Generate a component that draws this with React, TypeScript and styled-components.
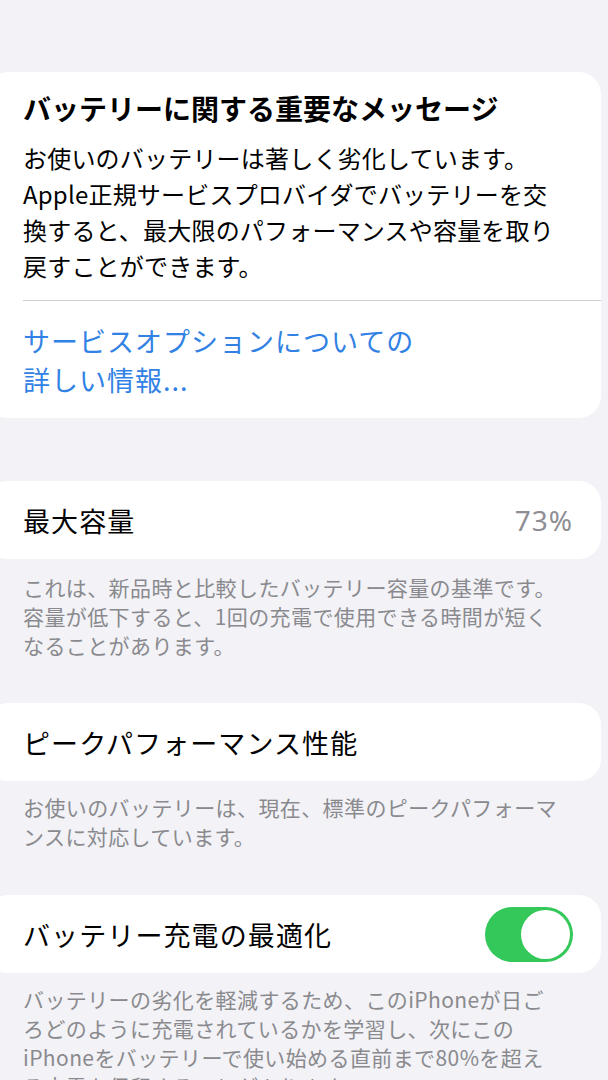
import React from 'react';
import styled, { createGlobalStyle } from 'styled-components';

const GlobalStyle = createGlobalStyle`
  html, body {
    margin: 0;
    padding: 0;
    background: #f2f2f7;
  }
  body {
    font-family: "Noto Sans CJK JP", "Noto Sans", sans-serif;
    color: #000;
    -webkit-font-smoothing: antialiased;
  }
`;

const StyledPage = styled.div`
  width: 608px;
  height: 1080px;
  overflow: hidden;
  padding-top: 72px;
  box-sizing: border-box;
`;

const StyledCard = styled.div<{ $gap?: number }>`
  margin: ${(p) => p.$gap ?? 0}px 7px 0 -14px;
  padding-left: 37px;
  background: #fff;
  border-radius: 22px;
`;

const StyledMessage = styled.div`
  padding: 18px 0 19px;
`;

const StyledTitle = styled.div`
  font-size: 28px;
  line-height: 36px;
  font-weight: 700;
`;

const StyledBody = styled.div`
  margin-top: 14px;
  padding-right: 20px;
  font-size: 24px;
  line-height: 36px;
  letter-spacing: 0.2px;
`;

const StyledDivider = styled.div`
  height: 1px;
  background: #cfcfd3;
  margin-top: 16px;
`;

const StyledLink = styled.div`
  margin-top: 20px;
  font-size: 27px;
  line-height: 39px;
  letter-spacing: 1px;
  color: #3182e4;
`;

const StyledRow = styled.div`
  height: 78px;
  display: flex;
  align-items: center;
  justify-content: space-between;
  padding-right: 28px;
`;

const StyledLabel = styled.span`
  font-size: 27px;
  letter-spacing: 1.1px;
`;

const StyledValue = styled.span`
  font-size: 28px;
  letter-spacing: 1px;
  color: #8e8e93;
  font-family: "Noto Sans", "Noto Sans CJK JP", sans-serif;
`;

const StyledFooter = styled.div<{ $top: number }>`
  margin-top: ${(p) => p.$top}px;
  padding: 0 20px 0 23px;
  font-size: 21px;
  line-height: 29px;
  letter-spacing: 0.4px;
  color: #8a8a8e;
`;

const StyledToggle = styled.div<{ $on: boolean }>`
  width: 88px;
  height: 55px;
  border-radius: 28px;
  background: ${(p) => (p.$on ? '#34c759' : '#e9e9ea')};
  display: flex;
  align-items: center;
  justify-content: ${(p) => (p.$on ? 'flex-end' : 'flex-start')};
  padding: 3px;
  box-sizing: border-box;

  &::after {
    content: '';
    width: 49px;
    height: 49px;
    border-radius: 50%;
    background: #fff;
  }
`;

const App = () => (
  <StyledPage>
    <GlobalStyle />
    <StyledCard>
      <StyledMessage>
        <StyledTitle>バッテリーに関する重要なメッセージ</StyledTitle>
        <StyledBody>
          お使いのバッテリーは著しく劣化しています。
          <br />
          Apple正規サービスプロバイダでバッテリーを交
          <br />
          換すると、最大限のパフォーマンスや容量を取り
          <br />
          戻すことができます。
        </StyledBody>
        <StyledDivider />
        <StyledLink>
          サービスオプションについての
          <br />
          詳しい情報...
        </StyledLink>
      </StyledMessage>
    </StyledCard>

    <StyledCard $gap={63}>
      <StyledRow>
        <StyledLabel>最大容量</StyledLabel>
        <StyledValue>73%</StyledValue>
      </StyledRow>
    </StyledCard>
    <StyledFooter $top={14}>
      これは、新品時と比較したバッテリー容量の基準です。
      <br />
      容量が低下すると、1回の充電で使用できる時間が短く
      <br />
      なることがあります。
    </StyledFooter>

    <StyledCard $gap={43}>
      <StyledRow>
        <StyledLabel>ピークパフォーマンス性能</StyledLabel>
      </StyledRow>
    </StyledCard>
    <StyledFooter $top={12}>
      お使いのバッテリーは、現在、標準のピークパフォーマ
      <br />
      ンスに対応しています。
    </StyledFooter>

    <StyledCard $gap={44}>
      <StyledRow>
        <StyledLabel>バッテリー充電の最適化</StyledLabel>
        <StyledToggle $on />
      </StyledRow>
    </StyledCard>
    <StyledFooter $top={12}>
      バッテリーの劣化を軽減するため、このiPhoneが日ご
      <br />
      ろどのように充電されているかを学習し、次にこの
      <br />
      iPhoneをバッテリーで使い始める直前まで80%を超え
      <br />
      る充電を保留することがあります。
    </StyledFooter>
  </StyledPage>
);

export default App;
